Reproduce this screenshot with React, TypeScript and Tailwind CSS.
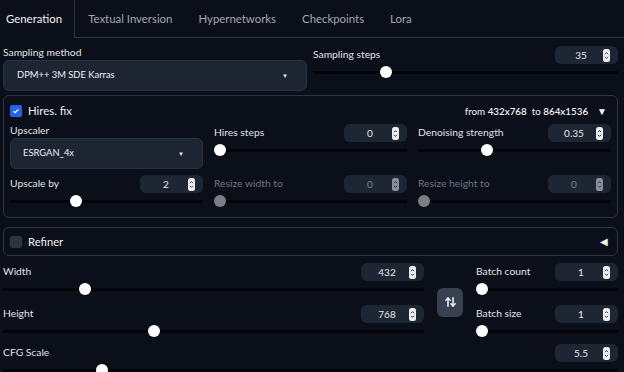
import React from 'react';

const Spinner = ({ dim }: { dim?: boolean }) => (
  <svg width="7" height="13" viewBox="0 0 7 13" className="shrink-0">
    <rect x="0" y="0" width="7" height="13" rx="2.5" fill={dim ? '#8b909a' : '#eceef1'} />
    <path d="M2 5.2 L3.5 3.6 L5 5.2" stroke="#1f2633" fill="none" strokeWidth="0.9" />
    <path d="M2 7.8 L3.5 9.4 L5 7.8" stroke="#1f2633" fill="none" strokeWidth="0.9" />
  </svg>
);

const NumberBox = ({ value, dim }: { value: string; dim?: boolean }) => (
  <div className="flex h-[18px] w-[63px] shrink-0 items-center rounded-[6px] bg-[#1f2633] pl-[4px] pr-[8px]">
    <span className={`flex-1 text-center text-[10px] ${dim ? 'text-[#7c828e]' : 'text-[#e6e8eb]'}`}>{value}</span>
    <Spinner dim={dim} />
  </div>
);

const Slider = ({ pos, dim }: { pos: number; dim?: boolean }) => (
  <div className="relative h-[12px]">
    <div className="absolute inset-x-0 top-[5px] h-[3px] bg-[#030509]" />
    <div
      className={`absolute top-0 h-[12px] w-[12px] rounded-full ${dim ? 'bg-[#7d7f84]' : 'bg-white'}`}
      style={{ left: `calc((100% - 12px) * ${pos})` }}
    />
  </div>
);

interface FieldProps {
  label: string;
  value: string;
  pos: number;
  dim?: boolean;
}

const SliderField = ({ label, value, pos, dim }: FieldProps) => (
  <div className="flex flex-col">
    <div className="flex h-[18px] items-center justify-between">
      <span className={`text-[10.3px] ${dim ? 'text-[#6e7482]' : 'text-[#e0e2e6]'}`}>{label}</span>
      <NumberBox value={value} dim={dim} />
    </div>
    <div className="mt-[2px]">
      <Slider pos={pos} dim={dim} />
    </div>
  </div>
);

const Dropdown = ({ label, value, pad }: { label: string; value: string; pad: string }) => (
  <div className="flex flex-col">
    <div className="flex h-[14px] items-center text-[10.3px] text-[#e0e2e6]">{label}</div>
    <div className={`flex h-[31px] items-center justify-between rounded-[6px] border border-[#2a3140] bg-[#1e2532] ${pad} pr-[18px]`}>
      <span className="text-[9.4px] text-[#eef0f3]">{value}</span>
      <span className="text-[6px] text-[#e6e8eb]">▼</span>
    </div>
  </div>
);

const Check = () => (
  <div className="flex h-[12px] w-[12px] items-center justify-center rounded-[2px] bg-[#2563eb]">
    <svg width="8" height="8" viewBox="0 0 8 8">
      <path d="M1.6 4.2 L3.2 5.7 L6.4 2.4" stroke="white" strokeWidth="1.3" fill="none" />
    </svg>
  </div>
);

const SwapIcon = () => (
  <svg width="11" height="10" viewBox="0 0 11 10" fill="none" stroke="#eef0f3" strokeWidth="1.6" strokeLinecap="round" strokeLinejoin="round">
    <path d="M3 9.2V1" />
    <path d="M0.9 3.2 L3 1 L5.1 3.2" />
    <path d="M8 0.8V9" />
    <path d="M5.9 6.8 L8 9 L10.1 6.8" />
  </svg>
);

export default function App() {
  return (
    <div className="h-[372px] w-[624px] overflow-hidden bg-[#0b0f19] font-['Lato','Noto_Sans',sans-serif]">
      {/* tabs */}
      <div className="flex h-[38px]">
        <div className="flex items-center border-r border-[#2d3443] pl-[6px] pr-[12px] text-[11.4px] text-[#eef0f3]">
          Generation
        </div>
        <div className="flex flex-1 items-center border-b border-[#2d3443] text-[11.4px] text-[#a3a8b2]">
          <span className="px-[13px]">Textual Inversion</span>
          <span className="px-[13px]">Hypernetworks</span>
          <span className="px-[13px]">Checkpoints</span>
          <span className="px-[13px]">Lora</span>
        </div>
      </div>

      <div className="pl-[3px] pr-[6px] pt-[8px]">
        {/* sampling */}
        <div className="grid grid-cols-[304px_1fr] gap-x-[6px]">
          <Dropdown label="Sampling method" value="DPM++ 3M SDE Karras" pad="pl-[13px]" />
          <SliderField label="Sampling steps" value="35" pos={0.23} />
        </div>

        {/* hires fix */}
        <div className="mt-[4px] rounded-[6px] border border-[#2d3443] px-[6px] pb-[10px] pt-[5px]">
          <div className="flex h-[20px] items-center justify-between">
            <div className="flex items-center gap-[6px]">
              <Check />
              <span className="text-[11.4px] text-[#eef0f3]">Hires. fix</span>
            </div>
            <div className="flex items-center gap-[9px] pr-[4px] text-[9.8px] text-[#eef0f3]">
              <span>
                from <b className="font-semibold">432x768</b>&nbsp; to <b className="font-semibold">864x1536</b>
              </span>
              <span className="text-[10px]">▼</span>
            </div>
          </div>
          <div className="mt-[3px] grid grid-cols-3 gap-x-[11px] gap-y-[6px]">
            <Dropdown label="Upscaler" value="ESRGAN_4x" pad="pl-[12px]" />
            <SliderField label="Hires steps" value="0" pos={0} />
            <SliderField label="Denoising strength" value="0.35" pos={0.35} />
            <SliderField label="Upscale by" value="2" pos={0.333} />
            <SliderField label="Resize width to" value="0" pos={0} dim />
            <SliderField label="Resize height to" value="0" pos={0} dim />
          </div>
        </div>

        {/* refiner */}
        <div className="mt-[9px] flex h-[29px] items-center justify-between rounded-[6px] border border-[#2d3443] px-[6px]">
          <div className="flex items-center gap-[6px] pt-[2px]">
            <div className="h-[12px] w-[12px] rounded-[2px] bg-[#2c3442]" />
            <span className="text-[11.2px] text-[#eef0f3]">Refiner</span>
          </div>
          <span className="pr-[3px] text-[10px] text-[#eef0f3]">◀</span>
        </div>

        {/* dimensions */}
        <div className="mt-[7px] flex items-center gap-[13px]">
          <div className="flex flex-1 flex-col gap-[10px]">
            <SliderField label="Width" value="432" pos={0.186} />
            <SliderField label="Height" value="768" pos={0.355} />
          </div>
          <div className="mt-[4px] flex h-[29px] w-[26px] items-center justify-center rounded-[6px] bg-[#374151]">
            <SwapIcon />
          </div>
          <div className="flex w-[142px] flex-col gap-[10px]">
            <SliderField label="Batch count" value="1" pos={0} />
            <SliderField label="Batch size" value="1" pos={0} />
          </div>
        </div>

        <div className="mt-[7px]">
          <SliderField label="CFG Scale" value="5.5" pos={0.155} />
        </div>
      </div>
    </div>
  );
}
